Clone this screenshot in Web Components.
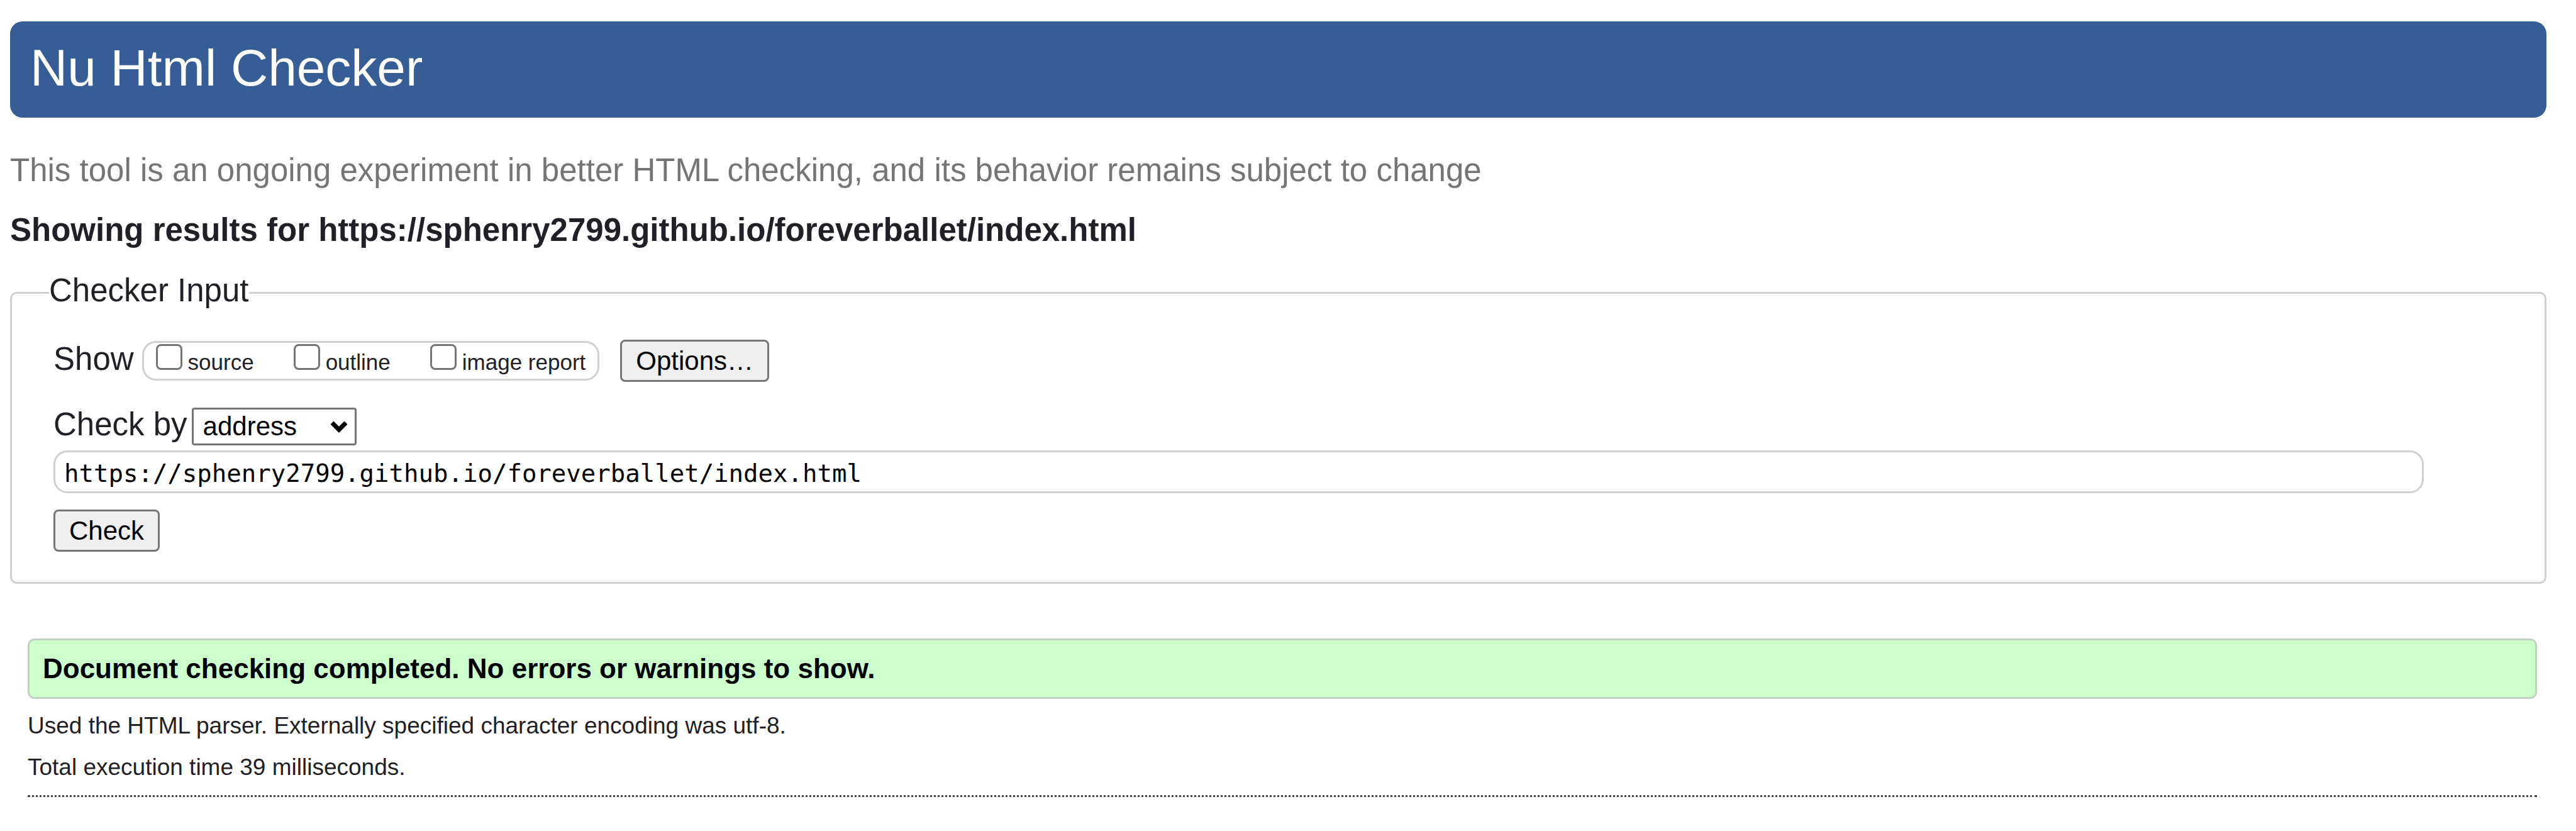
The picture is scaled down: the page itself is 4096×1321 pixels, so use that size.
<!DOCTYPE html>
<html lang="en">
<head>
<meta charset="utf-8">
<title>Nu Html Checker</title>
<style>
  body {
    margin: 0;
    background: #fff;
    color: #1f2126;
    font: 51px/60px "Liberation Sans", Arial, sans-serif;
    --line: #d0d0d0;
    --control-line: #767676;
    --text-control: 42px;
  }
</style>
</head>
<body>
<checker-page>
  <page-banner slot="banner">Nu Html Checker</page-banner>
  <span slot="tagline">This tool is an ongoing experiment in better HTML checking, and its behavior remains subject to change</span>
  <span slot="heading">Showing results for https://sphenry2799.github.io/foreverballet/index.html</span>
  <checker-form url="https://sphenry2799.github.io/foreverballet/index.html">Checker Input</checker-form>
  <checker-results>
    <span slot="status">Document checking completed. No errors or warnings to show.</span>
    <p slot="detail">Used the HTML parser. Externally specified character encoding was utf-8.</p>
    <p slot="detail">Total execution time 39 milliseconds.</p>
  </checker-results>
</checker-page>

<script>
  const define = (name, html, setup) => {
    const template = document.createElement('template');
    template.innerHTML = html;
    customElements.define(name, class extends HTMLElement {
      constructor() {
        super();
        this.attachShadow({ mode: 'open' }).append(template.content.cloneNode(true));
      }
      connectedCallback() {
        if (setup) setup(this, this.shadowRoot);
      }
    });
  };

  define('checker-page', `
    <style>
      :host { display: block; padding: 34px 47px 50px 16px; }
      p, h2 { margin: 0; font-size: inherit; }
      .tagline { margin-top: 54px; color: #757575; }
      h2 { margin-top: 35px; font-weight: bold; }
    </style>
    <slot name="banner"></slot>
    <p class="tagline"><slot name="tagline"></slot></p>
    <h2><slot name="heading"></slot></h2>
    <main><slot></slot></main>`);

  define('page-banner', `
    <style>
      :host { display: block; padding: 26px 32px 31px; border-radius: 20px; background: #365d95; color: #fff; }
      h1 { margin: 0; font-size: 82px; line-height: 96px; font-weight: normal; }
    </style>
    <h1><slot></slot></h1>`);

  define('check-option', `
    <style>
      :host { display: block; }
      label { display: flex; align-items: baseline; gap: 9px; font-size: 35px; line-height: 53px; }
      input {
        appearance: none; box-sizing: border-box; width: 42px; height: 41px; margin: 0;
        border: 3px solid var(--control-line); border-radius: 8px; background: #fff;
      }
      input:checked { background: #0075ff; }
    </style>
    <label><input type="checkbox"><span><slot></slot></span></label>`);

  define('push-button', `
    <style>
      :host { display: block; }
      button {
        display: block; box-sizing: border-box; margin: 0; padding: 0 22px;
        border: 3px solid var(--control-line); border-radius: 8px; background: #efefef; color: #000;
        font: var(--text-control)/61px "Liberation Sans", Arial, sans-serif;
      }
    </style>
    <button type="button"><slot></slot></button>`);

  define('method-select', `
    <style>
      :host { display: flex; align-items: baseline; gap: 7px; line-height: 54px; }
      .box { display: grid; align-items: center; justify-items: end; }
      select, svg { grid-area: 1 / 1; }
      select {
        appearance: none; box-sizing: border-box; width: 262px; margin: 0; padding: 0 15px;
        border: 3px solid var(--control-line); border-radius: 4px; background: #fff; color: #000;
        font: var(--text-control)/54px "Liberation Sans", Arial, sans-serif;
      }
      svg { width: 28px; height: 20px; margin-right: 14px; pointer-events: none; }
    </style>
    <label for="method">Check by</label>
    <span class="box">
      <select id="method">
        <option>address</option>
        <option>file upload</option>
        <option>text input</option>
      </select>
      <svg viewBox="0 0 28 20" aria-hidden="true"><path d="M3 4 14 15 25 4" fill="none" stroke="#000" stroke-width="7"/></svg>
    </span>`);

  define('checker-form', `
    <style>
      :host { display: block; margin-top: 36px; }
      fieldset { margin: 0; min-width: 0; padding: 0 192px 48px 59px; border: 3px solid var(--line); border-radius: 11px; }
      legend { padding: 0 0 6px; }
      .rows { display: flex; flex-direction: column; align-items: flex-start; padding: 42px 0 0 7px; }
      .show { display: flex; align-items: baseline; line-height: 54px; }
      .options {
        display: flex; gap: 63px; margin: 0 33px 0 13px; padding: 2px 19px 0;
        border: 3px solid var(--line); border-radius: 22px;
      }
      method-select { margin-top: 41px; }
      input {
        box-sizing: border-box; width: 100%; margin: 8px 0 26px; padding: 4px 14px 0;
        border: 3px solid var(--line); border-radius: 22px; background: #fff; color: #000;
        font: 39px/58px "DejaVu Sans Mono", monospace; height: 68px;
      }
    </style>
    <form>
      <fieldset>
        <legend><slot></slot></legend>
        <div class="rows">
          <div class="show">
            <span id="show">Show</span>
            <div class="options" role="group" aria-labelledby="show">
              <check-option>source</check-option>
              <check-option>outline</check-option>
              <check-option>image report</check-option>
            </div>
            <push-button>Options…</push-button>
          </div>
          <method-select></method-select>
          <input type="url" aria-label="Address" spellcheck="false">
          <push-button>Check</push-button>
        </div>
      </fieldset>
    </form>`, (host, root) => {
      root.querySelector('input').value = host.getAttribute('url');
    });

  define('checker-results', `
    <style>
      :host { display: block; margin: 87px 15px 0 28px; padding-bottom: 11px; border-bottom: 3px dotted #444; font-size: 37px; line-height: 66px; }
      .status {
        margin: 0 0 10px; padding: 0 21px; border: 3px solid #c0d3c0; border-radius: 11px;
        background: #cfc; color: #000; font-size: 44px; line-height: 90px; font-weight: bold;
      }
      ::slotted(p) { margin: 0; }
    </style>
    <p class="status"><slot name="status"></slot></p>
    <slot name="detail"></slot>`);
</script>
</body>
</html>
